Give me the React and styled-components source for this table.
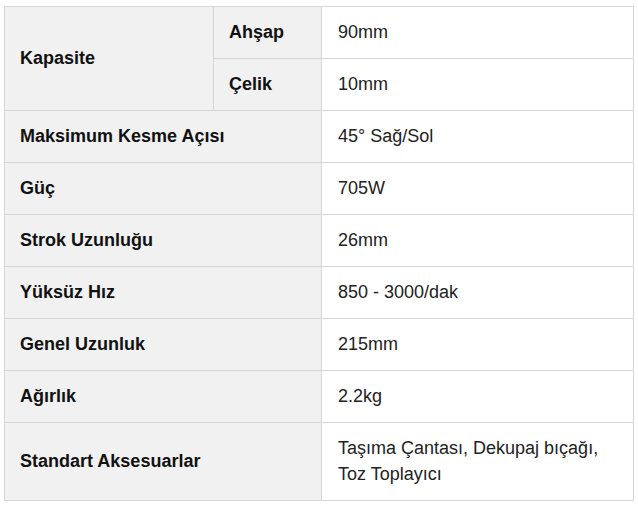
import styled, { createGlobalStyle } from "styled-components";

const GlobalStyle = createGlobalStyle`
  body {
    margin: 0;
    padding: 6px 4px;
    background: #fff;
    font-family: "Liberation Sans", Arial, sans-serif;
    color: #222;
  }
`;

const SpecTable = styled.table`
  width: 630px;
  border-collapse: collapse;
  font-size: 18px;
  line-height: 26px;
  table-layout: fixed;
`;

const Cell = styled.td`
  border: 1px solid #d6d6d6;
  padding: 12px 15px 13px 15px;
  vertical-align: middle;
  text-align: left;
`;

const HeadCell = styled(Cell)`
  background: #f1f1f1;
  font-weight: bold;
  color: #111;
`;

const ValueCell = styled(Cell)`
  padding-left: 16px;
  background: #fff;
`;

const specs = [
  ["Maksimum Kesme Açısı", "45° Sağ/Sol"],
  ["Güç", "705W"],
  ["Strok Uzunluğu", "26mm"],
  ["Yüksüz Hız", "850 - 3000/dak"],
  ["Genel Uzunluk", "215mm"],
  ["Ağırlık", "2.2kg"],
  ["Standart Aksesuarlar", "Taşıma Çantası, Dekupaj bıçağı, Toz Toplayıcı"],
];

export default function App() {
  return (
    <>
      <GlobalStyle />
      <SpecTable>
        <colgroup>
          <col style={{ width: 209 }} />
          <col style={{ width: 108 }} />
          <col />
        </colgroup>
        <tbody>
          <tr>
            <HeadCell rowSpan={2}>Kapasite</HeadCell>
            <HeadCell>Ahşap</HeadCell>
            <ValueCell>90mm</ValueCell>
          </tr>
          <tr>
            <HeadCell>Çelik</HeadCell>
            <ValueCell>10mm</ValueCell>
          </tr>
          {specs.map(([label, value]) => (
            <tr key={label}>
              <HeadCell colSpan={2}>{label}</HeadCell>
              <ValueCell>{value}</ValueCell>
            </tr>
          ))}
        </tbody>
      </SpecTable>
    </>
  );
}
